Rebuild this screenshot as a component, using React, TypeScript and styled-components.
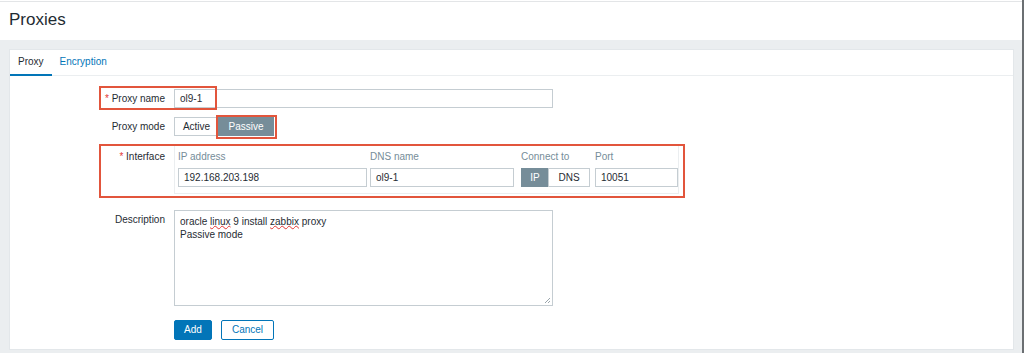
import React from "react";
import styled, { createGlobalStyle } from "styled-components";

const Global = createGlobalStyle`
  html, body { margin: 0; padding: 0; background: #fff; }
  body { font-family: "Liberation Sans", Arial, sans-serif; font-size: 10px; color: #1f2c33; }
  * { box-sizing: border-box; }
`;

const Page = styled.div`
  width: 1024px;
  height: 353px;
  display: flex;
  flex-direction: column;
  border-right: 2px solid #6b6f72;
  overflow: hidden;
`;

const Header = styled.header`
  height: 39px;
  border-top: 1px solid #e3e5e7;
  margin-top: 1px;
  display: flex;
  align-items: center;
  padding-left: 9px;
  background: #fff;
`;

const Title = styled.h1`
  margin: 0;
  font-size: 17px;
  font-weight: normal;
  color: #1f2c33;
  padding-bottom: 2px;
`;

const Main = styled.main`
  flex: 1;
  background: #ebeef0;
  padding: 9px 8px 3px 9px;
  display: flex;
`;

const Panel = styled.section`
  position: relative;
  flex: 1;
  background: #fff;
  border: 1px solid #e3e7ea;
  display: flex;
  flex-direction: column;
`;

const Tabs = styled.nav`
  display: flex;
  height: 26px;
  border-bottom: 1px solid #ebeef0;
`;

const Tab = styled.div<{ $active?: boolean }>`
  padding: 0 8px;
  display: flex;
  align-items: center;
  color: ${(p) => (p.$active ? "#1f2c33" : "#0275b8")};
  border-bottom: ${(p) => (p.$active ? "2px solid #0275b8" : "2px solid transparent")};
  margin-bottom: -1px;
  padding-bottom: 1px;
`;

const Form = styled.div`
  display: grid;
  grid-template-columns: 155px 1fr;
  column-gap: 9px;
  row-gap: 9px;
  padding-top: 13px;
  align-items: start;
`;

const Label = styled.div<{ $required?: boolean; $top?: number }>`
  text-align: right;
  line-height: 19px;
  padding-top: ${(p) => p.$top ?? 0}px;
  color: #1f2c33;
  &::before {
    content: ${(p) => (p.$required ? '"* "' : '""')};
    color: #e33734;
  }
`;

const TextInput = styled.div<{ $w: number }>`
  width: ${(p) => p.$w}px;
  height: 19px;
  border: 1px solid #c5cdd2;
  background: #fff;
  padding: 0 5px;
  line-height: 17px;
  color: #1f2c33;
`;

const Segmented = styled.div`
  display: flex;
`;

const SegBtn = styled.div<{ $on?: boolean; $w: number }>`
  width: ${(p) => p.$w}px;
  height: 19px;
  line-height: 17px;
  text-align: center;
  border: 1px solid ${(p) => (p.$on ? "#768d99" : "#c5cdd2")};
  background: ${(p) => (p.$on ? "#768d99" : "#fff")};
  color: ${(p) => (p.$on ? "#fff" : "#1f2c33")};
  & + & { margin-left: -1px; }
`;

const IfaceTable = styled.div`
  display: grid;
  grid-template-columns: 192px 151px 74px 83px;
  row-gap: 4px;
  border: 1px solid #ebeef0;
  padding: 4px 5px 6px 3px;
  width: 505px;
  margin-bottom: 7px;
`;

const ColHead = styled.div`
  color: #768d99;
  line-height: 14px;
`;

const TextArea = styled.div`
  width: 379px;
  height: 96px;
  border: 1px solid #c5cdd2;
  padding: 4px 5px;
  line-height: 13px;
  position: relative;
`;

const TextLine = styled.div`
  white-space: nowrap;
`;

const Squiggle = styled.span`
  text-decoration: underline wavy #e33734;
  text-decoration-thickness: 1px;
  text-underline-offset: 0px;
`;

const Grip = styled.svg`
  position: absolute;
  right: 1px;
  bottom: 1px;
`;

const Buttons = styled.div`
  display: flex;
  gap: 9px;
  padding-top: 5px;
`;

const Button = styled.div<{ $primary?: boolean; $w: number }>`
  width: ${(p) => p.$w}px;
  height: 20px;
  line-height: 18px;
  text-align: center;
  border: 1px solid #0275b8;
  border-radius: 2px;
  background: ${(p) => (p.$primary ? "#0275b8" : "#fff")};
  color: ${(p) => (p.$primary ? "#fff" : "#0275b8")};
`;

const Mark = styled.div<{ $x: number; $y: number; $w: number; $h: number }>`
  position: absolute;
  left: ${(p) => p.$x}px;
  top: ${(p) => p.$y}px;
  width: ${(p) => p.$w}px;
  height: ${(p) => p.$h}px;
  border: 2px solid #e2553c;
  pointer-events: none;
`;

export default function App() {
  return (
    <>
      <Global />
      <Page>
        <Header>
          <Title>Proxies</Title>
        </Header>
        <Main>
          <Panel>
            <Tabs>
              <Tab $active>Proxy</Tab>
              <Tab>Encryption</Tab>
            </Tabs>
            <Form>
              <Label $required>Proxy name</Label>
              <TextInput $w={379}>ol9-1</TextInput>

              <Label>Proxy mode</Label>
              <Segmented>
                <SegBtn $w={45}>Active</SegBtn>
                <SegBtn $w={56} $on>Passive</SegBtn>
              </Segmented>

              <Label $required $top={2}>Interface</Label>
              <IfaceTable>
                <ColHead>IP address</ColHead>
                <ColHead>DNS name</ColHead>
                <ColHead>Connect to</ColHead>
                <ColHead>Port</ColHead>
                <TextInput $w={189}>192.168.203.198</TextInput>
                <TextInput $w={144}>ol9-1</TextInput>
                <Segmented>
                  <SegBtn $w={28} $on>IP</SegBtn>
                  <SegBtn $w={42}>DNS</SegBtn>
                </Segmented>
                <TextInput $w={83}>10051</TextInput>
              </IfaceTable>

              <Label $top={0}>Description</Label>
              <TextArea>
                <TextLine>
                  oracle <Squiggle>linux</Squiggle> 9 install <Squiggle>zabbix</Squiggle> proxy
                </TextLine>
                <TextLine>Passive mode</TextLine>
                <Grip width="8" height="8" viewBox="0 0 8 8">
                  <path d="M7 2 L2 7 M7 5 L5 7" stroke="#9aa5ab" strokeWidth="1" />
                </Grip>
              </TextArea>

              <div />
              <Buttons>
                <Button $primary $w={38}>Add</Button>
                <Button $w={53}>Cancel</Button>
              </Buttons>
            </Form>
            <Mark $x={89} $y={36} $w={118} $h={24} />
            <Mark $x={206} $y={65} $w={61} $h={24} />
            <Mark $x={89} $y={94} $w={586} $h={54} />
          </Panel>
        </Main>
      </Page>
    </>
  );
}
